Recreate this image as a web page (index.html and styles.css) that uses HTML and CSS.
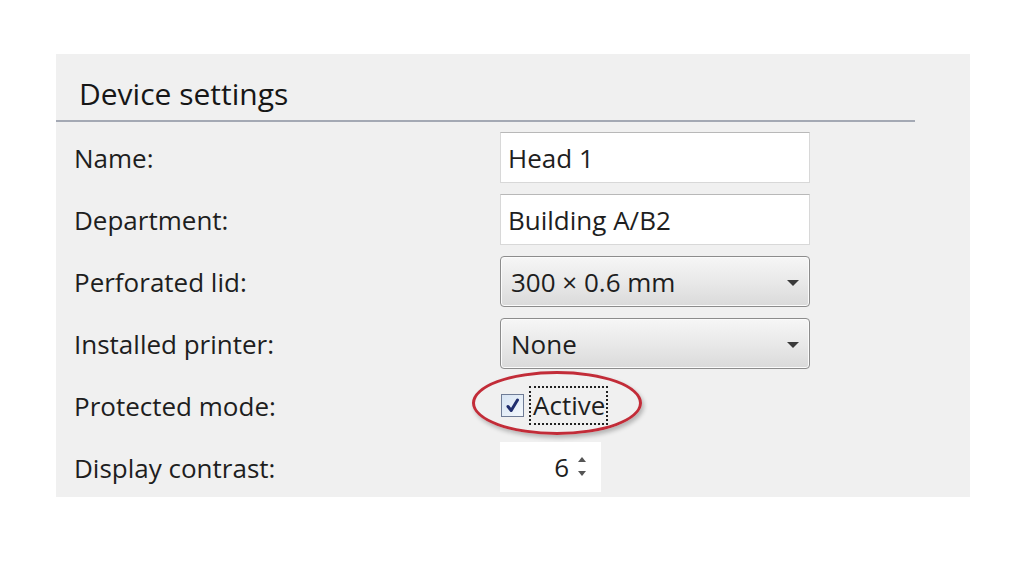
FILE: index.html
```html
<!DOCTYPE html>
<html lang="en">
<head>
    <meta charset="UTF-8">
    <meta name="viewport" content="width=device-width, initial-scale=1.0">
    <title>Device settings</title>
    <link rel="stylesheet" href="styles.css">
</head>
<body>
    <div class="panel">
        <div class="header">
            <h2>Device settings</h2>
        </div>
        <div class="form">
            <label class="label">Name:</label>
            <div class="field"><div class="textbox">Head 1</div></div>

            <label class="label">Department:</label>
            <div class="field"><div class="textbox">Building A/B2</div></div>

            <label class="label">Perforated lid:</label>
            <div class="field">
                <div class="combo">
                    <span>300 &times; 0.6 mm</span>
                    <span class="arrow"></span>
                </div>
            </div>

            <label class="label">Installed printer:</label>
            <div class="field">
                <div class="combo">
                    <span>None</span>
                    <span class="arrow"></span>
                </div>
            </div>

            <label class="label">Protected mode:</label>
            <div class="field">
                <div class="check">
                    <span class="box">
                        <svg width="17" height="17" viewBox="0 0 17 17">
                            <path d="M4 9.5 L7.2 13.5 L13.5 3" fill="none" stroke="#1f2d6e" stroke-width="3" stroke-linecap="round" stroke-linejoin="round"/>
                        </svg>
                    </span>
                    <span class="caption">Active</span>
                </div>
                <!-- red annotation ring drawn over the checkbox -->
                <div class="ring"></div>
            </div>

            <label class="label">Display contrast:</label>
            <div class="field">
                <div class="spinner">
                    <span class="value">6</span>
                    <span class="spin">
                        <span class="up"></span>
                        <span class="down"></span>
                    </span>
                </div>
            </div>
        </div>
    </div>
</body>
</html>
```

FILE: styles.css
```css
body {
    margin: 0;
    background-color: white;
    font-family: "Open Sans", "Noto Sans", sans-serif;
    color: #1e1e1e;
}
.panel {
    margin: 54px 0 0 56px;
    width: 914px;
    height: 443px;
    background-color: #f0f0f0;
}
.header {
    width: 859px;
    height: 68px;
    border-bottom: 2px solid #a4a9b4;
    box-sizing: border-box;
    padding-left: 23px;
    display: flex;
    align-items: flex-end;
}
h2 {
    margin: 0 0 6px 0;
    font-size: 30px;
    font-weight: 500;
    color: #161616;
}
.form {
    display: grid;
    grid-template-columns: 444px 310px;
    grid-auto-rows: 51px;
    row-gap: 11px;
    padding-top: 10px;
}
.label {
    padding-left: 18px;
    display: flex;
    align-items: center;
    font-size: 26px;
}
.field {
    position: relative;
    display: flex;
    align-items: center;
}
.textbox {
    width: 100%;
    height: 100%;
    box-sizing: border-box;
    background-color: white;
    border: 1px solid #d8d8d8;
    border-top-color: #b8b8b8;
    padding-left: 7px;
    display: flex;
    align-items: center;
    font-size: 26px;
}
.combo {
    width: 100%;
    height: 100%;
    box-sizing: border-box;
    border: 1px solid #8c8c8c;
    border-radius: 4px;
    background: linear-gradient(#f6f6f6, #e9e9e9 50%, #dadada);
    box-shadow: inset 0 0 0 1px #fbfbfb;
    padding: 0 10px 0 10px;
    display: flex;
    align-items: center;
    justify-content: space-between;
    font-size: 26px;
}
.arrow {
    width: 0;
    height: 0;
    border-left: 6px solid transparent;
    border-right: 6px solid transparent;
    border-top: 6px solid #3a3a3a;
    margin-top: 2px;
}
.check {
    display: flex;
    align-items: center;
    gap: 5px;
    margin-left: 1px;
}
.box {
    width: 23px;
    height: 23px;
    box-sizing: border-box;
    border: 1px solid #6f7c96;
    background: linear-gradient(135deg, #d6e3f3, #f4f8fc);
    display: flex;
    align-items: center;
    justify-content: center;
}
.caption {
    border: 2px dotted #222;
    padding: 1px 1px 2px 2px;
    font-size: 26px;
    line-height: 32px;
}
.ring {
    position: absolute;
    left: -28px;
    top: -9px;
    width: 164px;
    height: 58px;
    border: 3px solid #c22c38;
    border-radius: 50%;
    box-shadow: 2px 3px 4px rgba(0, 0, 0, 0.25);
}
.spinner {
    width: 101px;
    height: 50px;
    background-color: white;
    display: flex;
    align-items: center;
    justify-content: flex-end;
    gap: 9px;
    padding-right: 15px;
    box-sizing: border-box;
    margin-top: -2px;
    font-size: 26px;
}
.spin {
    display: flex;
    flex-direction: column;
    gap: 9px;
}
.up, .down {
    width: 0;
    height: 0;
    border-left: 4px solid transparent;
    border-right: 4px solid transparent;
}
.up {
    border-bottom: 5px solid #555;
}
.down {
    border-top: 5px solid #555;
}
```
